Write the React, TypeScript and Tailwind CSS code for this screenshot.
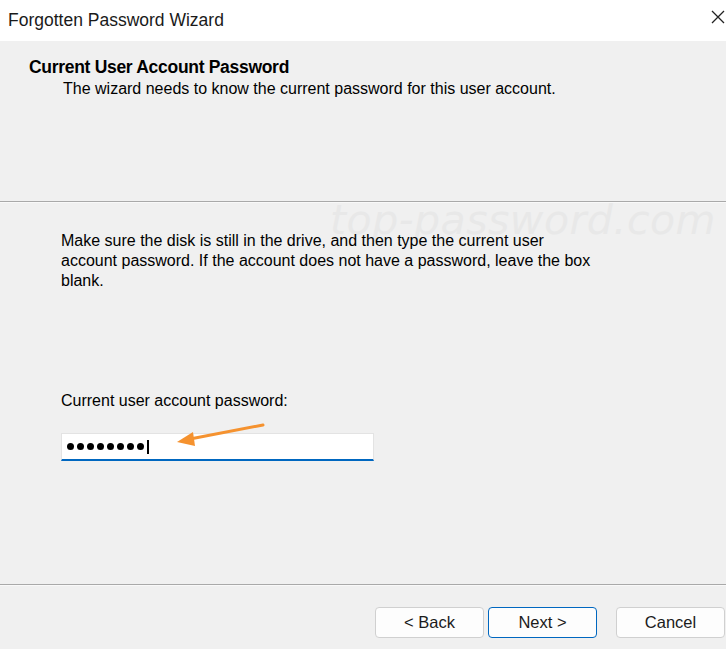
import React from "react";

const font = { fontFamily: '"Liberation Sans", Arial, sans-serif' };

function Separator() {
  return <div className="w-full border-t border-t-[#a9a9a9] border-b border-b-[#f9f9f9]" />;
}

function WizardButton({ label, focused }: { label: string; focused?: boolean }) {
  return (
    <button
      className={
        "h-[31px] w-[109px] rounded-[4px] bg-[#fdfdfd] text-[16.5px] text-[#1b1b1b] border " +
        (focused ? "border-[#0067c0]" : "border-[#d0d0d0]")
      }
    >
      {label}
    </button>
  );
}

export default function App() {
  return (
    <div className="relative w-[726px] h-[649px] bg-[#f0f0f0] flex flex-col overflow-hidden text-black" style={font}>
      {/* watermark */}
      <div className="absolute left-[330px] top-[190px] whitespace-nowrap text-[41px] italic tracking-[0.5px] text-[#e8e8e8] select-none pointer-events-none" style={{ fontFamily: '"DejaVu Sans", sans-serif' }}>
        top-password.com
      </div>

      {/* title bar */}
      <div className="relative h-[41px] bg-white flex items-center justify-between pl-[8px] shrink-0">
        <span className="text-[17.5px] text-[#1a1a1a]">Forgotten Password Wizard</span>
        <svg width="14" height="14" viewBox="0 0 14 14" className="mr-[1px] -mt-[7px]">
          <path d="M1 1 L13 13 M13 1 L1 13" stroke="#222" strokeWidth="1.3" />
        </svg>
      </div>

      {/* header */}
      <div className="relative h-[160px] shrink-0 pt-[16px]">
        <div className="pl-[29px] text-[17.5px] leading-[20px] font-bold tracking-[-0.3px]">Current User Account Password</div>
        <div className="pl-[63px] mt-[2px] text-[16px] leading-[20px]">
          The wizard needs to know the current password for this user account.
        </div>
      </div>

      <Separator />

      {/* body */}
      <div className="relative flex-1 pl-[61px] pt-[28px]">
        <p className="text-[16px] leading-[20px] whitespace-nowrap">
          <span className="block">Make sure the disk is still in the drive, and then type the current user</span>
          <span className="block">account password. If the account does not have a password, leave the box</span>
          <span className="block">blank.</span>
        </p>
        <div className="mt-[100px] text-[16px] leading-[20px]">Current user account password:</div>
        <div className="mt-[22px] w-[313px] h-[28px] bg-white border border-[#e3e3e3] border-b-2 border-b-[#0067c0] flex items-center pl-[5px] gap-[3px]">
          {Array.from({ length: 8 }).map((_, i) => (
            <span key={i} className="w-[7px] h-[7px] rounded-full bg-black" />
          ))}
          <span className="w-[1.5px] h-[14px] bg-black" />
        </div>
      </div>

      <Separator />

      {/* footer */}
      <div className="h-[63px] shrink-0 flex justify-end items-start pt-[21px] pr-[1px]">
        <WizardButton label="< Back" />
        <div className="ml-[4px]">
          <WizardButton label="Next >" focused />
        </div>
        <div className="ml-[19px]">
          <WizardButton label="Cancel" />
        </div>
      </div>

      {/* annotation arrow */}
      <svg className="absolute left-0 top-0 pointer-events-none" width="726" height="649">
        <path d="M263 425 L190 439" stroke="#f5922f" strokeWidth="3" strokeLinecap="round" />
        <path d="M177 442 L193 432 L195 446 Z" fill="#f5922f" />
      </svg>
    </div>
  );
}
